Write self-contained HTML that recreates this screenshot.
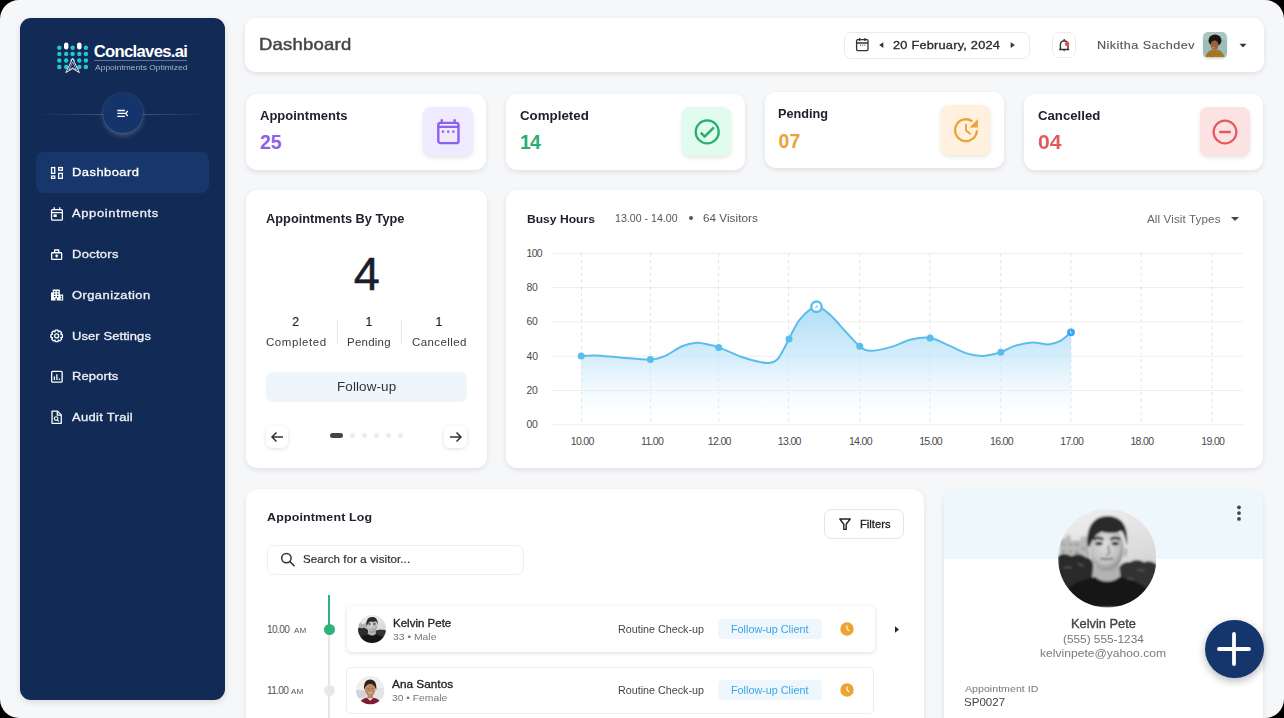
<!DOCTYPE html>
<html><head><meta charset="utf-8"><style>
html,body{margin:0;padding:0;background:#000;width:1284px;height:718px;overflow:hidden;}
#app{position:absolute;left:0;top:0;width:1284px;height:718px;background:#f6f7f9;border-radius:19px;overflow:hidden;font-family:"Liberation Sans",sans-serif;}
.t{position:absolute;white-space:nowrap;line-height:1;transform-origin:0 0;font-family:"Liberation Sans",sans-serif;}
</style></head><body><svg width="0" height="0" style="position:absolute"><defs><symbol id="kp" viewBox="0 0 100 100">
<defs>
<clipPath id="kpc"><circle cx="50" cy="50" r="50"/></clipPath>
<linearGradient id="kpsky" x1="0" y1="0" x2="0.3" y2="1"><stop offset="0" stop-color="#f0f0f0"/><stop offset="0.6" stop-color="#dcdcdc"/><stop offset="1" stop-color="#c8c8c8"/></linearGradient>
<radialGradient id="kpface" cx="0.45" cy="0.4" r="0.6"><stop offset="0" stop-color="#dedede"/><stop offset="0.7" stop-color="#c2c2c2"/><stop offset="1" stop-color="#8c8c8c"/></radialGradient>
<filter id="kpb" x="-5%" y="-5%" width="110%" height="110%"><feGaussianBlur stdDeviation="0.9"/></filter>
</defs>
<g clip-path="url(#kpc)"><g filter="url(#kpb)">
<rect width="100" height="100" fill="url(#kpsky)"/>
<path d="M2 52V30h6v-3h5v5h10v-4h8v24z" fill="#b9b9b9"/>
<path d="M4 36h3M11 36h3M17 36h4M24 40h4M4 43h3M11 43h3M17 44h4" stroke="#8a8a8a" stroke-width="1.6"/>
<path d="M0 48c5-4 10-2 14 0c4-3 10-3 14 1c4 0 7 3 8 7v44H0z" fill="#2c2c2c"/>
<path d="M100 56c-4-3-9-4-13-2c-4-3-10-3-14 0c-5-1-9 2-11 5v41h38z" fill="#333333"/>
<path d="M6 60c3-2 5 0 8-1M20 55c2 2 4 1 6 3M80 62c3-1 5 1 8 0M70 70c3 1 5 0 7 2" stroke="#555" stroke-width="1.6"/>
<path d="M36 58h26l3 22H33z" fill="#b3b3b3"/>
<ellipse cx="49.5" cy="40" rx="17" ry="23" fill="url(#kpface)"/>
<path d="M31 40c-3-2-3 8 1 9zM68 40c3-2 3 8-1 9z" fill="#a8a8a8"/>
<path d="M30 38c-2-16 4-31 20-31c14 0 22 9 20 30c-2-9-4-14-6-15c-5 3-12 3-20 1c-5 2-9 7-12 15z" fill="#2a2a2a"/>
<path d="M36 31c3-2 7-2 10 0M53 31c3-2 7-2 10 0" stroke="#2a2a2a" stroke-width="2.6" fill="none"/>
<ellipse cx="41.5" cy="35" rx="3.8" ry="1.9" fill="#2a2a2a"/>
<ellipse cx="58" cy="35" rx="3.8" ry="1.9" fill="#2a2a2a"/>
<path d="M51 37l1 8l-3 2" stroke="#9a9a9a" stroke-width="2.2" fill="none"/>
<path d="M43 50c4 1 9 1 13 0" stroke="#6d6d6d" stroke-width="1.8" fill="none"/>
<path d="M40 58c5 5 14 5 19 0" stroke="#a0a0a0" stroke-width="3" fill="none"/>
<path d="M4 100c2-16 8-24 22-28c6-2 10-3 12-3c5 6 19 6 24 0c2 0 6 1 12 3c14 4 20 12 22 28z" fill="#141414"/>
</g></g>
</symbol><symbol id="as" viewBox="0 0 100 100">
<defs><clipPath id="asc"><circle cx="50" cy="50" r="50"/></clipPath>
<filter id="asb" x="-5%" y="-5%" width="110%" height="110%"><feGaussianBlur stdDeviation="1.6"/></filter></defs>
<g clip-path="url(#asc)"><g filter="url(#asb)">
<rect width="100" height="100" fill="#f1efec"/>
<rect x="0" y="50" width="36" height="28" fill="#d3d3dc"/>
<rect x="62" y="42" width="38" height="40" fill="#e4e4e4"/>
<path d="M29 50c-4-24 6-38 21-38s25 14 21 38c-3-10-7-17-21-17s-18 7-21 17z" fill="#2f241d"/>
<ellipse cx="50" cy="49" rx="18" ry="22" fill="#c08a68"/>
<ellipse cx="43" cy="45" rx="2.6" ry="1.4" fill="#4a3020"/>
<ellipse cx="57" cy="45" rx="2.6" ry="1.4" fill="#4a3020"/>
<path d="M43 58c4 3 10 3 14 0" stroke="#f2e2da" stroke-width="2.4" fill="none"/>
<path d="M40 67h20v12H40z" fill="#bd8866"/>
<path d="M12 100c3-14 12-21 26-23l12 10l12-10c14 2 23 9 26 23z" fill="#7d1f33"/>
</g></g></symbol><symbol id="ns" viewBox="0 0 100 100">
<defs><filter id="nsb" x="-5%" y="-5%" width="110%" height="110%"><feGaussianBlur stdDeviation="1.6"/></filter></defs>
<g filter="url(#nsb)">
<rect width="100" height="100" fill="#9dbdbb"/>
<rect width="100" height="30" fill="#a9c6c3"/>
<ellipse cx="50" cy="33" rx="27" ry="23" fill="#1c1411"/>
<ellipse cx="48" cy="52" rx="16" ry="19" fill="#9b6243"/>
<ellipse cx="44" cy="62" rx="5" ry="3" fill="#e58aa0"/>
<path d="M10 100c4-20 18-32 40-32s34 12 40 32z" fill="#a47a2a"/>
<path d="M25 85l6 4M45 80l5 5M62 86l6 3M35 95l5 3" stroke="#6b4a1a" stroke-width="3"/>
</g></symbol></defs></svg><div id="app">
<div style="position:absolute;left:20.00px;top:18.00px;width:205.00px;height:682.00px;background:#122a56;border-radius:11px;box-shadow:0 2px 6px rgba(0,0,0,0.12);"></div>
<svg style="position:absolute;left:0.00px;top:0.00px;" width="240" height="90" viewBox="0 0 240 90"><circle cx="59.3" cy="47.7" r="2.2" fill="#22c8d2"/><rect x="64.00" y="42.4" width="4.4" height="7" rx="2.2" fill="#fff"/><circle cx="72.6" cy="47.7" r="2.2" fill="#22c8d2"/><rect x="77.10" y="42.4" width="4.4" height="7" rx="2.2" fill="#fff"/><circle cx="85.9" cy="47.7" r="2.2" fill="#22c8d2"/><circle cx="59.3" cy="53.9" r="2.2" fill="#22c8d2"/><circle cx="66.2" cy="53.9" r="2.2" fill="#22c8d2"/><circle cx="72.6" cy="53.9" r="2.2" fill="#22c8d2"/><circle cx="79.3" cy="53.9" r="2.2" fill="#22c8d2"/><circle cx="85.9" cy="53.9" r="2.2" fill="#22c8d2"/><circle cx="59.3" cy="60.5" r="2.2" fill="#22c8d2"/><circle cx="66.2" cy="60.5" r="2.2" fill="#22c8d2"/><circle cx="72.6" cy="60.5" r="2.2" fill="#22c8d2"/><circle cx="79.3" cy="60.5" r="2.2" fill="#22c8d2"/><circle cx="85.9" cy="60.5" r="2.2" fill="#22c8d2"/><circle cx="59.3" cy="67.0" r="2.2" fill="#22c8d2"/><circle cx="66.2" cy="67.0" r="2.2" fill="#22c8d2"/><circle cx="72.6" cy="67.0" r="2.2" fill="#22c8d2"/><circle cx="79.3" cy="67.0" r="2.2" fill="#22c8d2"/><circle cx="85.9" cy="67.0" r="2.2" fill="#22c8d2"/><path d="M72.6 58.4 L79.4 72.6 L72.6 68.6 L65.8 72.6 Z" fill="#122a56" stroke="#fff" stroke-width="0.9" stroke-linejoin="round"/><path d="M72.6 62 L76.4 70 L72.6 67.7 L68.8 70 Z" fill="none" stroke="#fff" stroke-width="0.55"/></svg>
<div class="t" style="left:93.80px;top:44px;font-size:16.65px;color:#fff;font-weight:700;letter-spacing:-0.700px;">Conclaves.ai</div>
<div style="position:absolute;left:94.00px;top:60.00px;width:93.00px;height:0.80px;background:rgba(255,255,255,0.35);"></div>
<div class="t" style="left:95.00px;top:64px;font-size:7.90px;color:#a9b4c8;transform:scaleX(1.075);">Appointments Optimized</div>
<div style="position:absolute;left:36.00px;top:113.80px;width:174.00px;height:1.00px;background:linear-gradient(90deg,rgba(255,255,255,0),rgba(255,255,255,0.22) 45%,rgba(255,255,255,0.22) 55%,rgba(255,255,255,0));"></div>
<div style="position:absolute;left:102.50px;top:92.50px;width:40.60px;height:40.60px;background:#15346b;border-radius:50%;box-shadow:0 3px 5px rgba(255,255,255,0.20),0 0 2px rgba(255,255,255,0.18);"></div>
<svg style="position:absolute;left:112.00px;top:105.00px;" width="22" height="16" viewBox="0 0 22 16"><path d="M5.3 5.5h7.6M5.3 8.4h7.6M5.3 11.3h7.6" stroke="#fff" stroke-width="1.3"/><path d="M15.8 6l-2.2 2.5l2.2 2.5" fill="none" stroke="#fff" stroke-width="1.2"/></svg>
<div style="position:absolute;left:36.00px;top:152.40px;width:173.30px;height:40.70px;background:#17366c;border-radius:8px;"></div>
<div class="t" style="left:72.00px;top:167px;font-size:11.55px;color:#fff;letter-spacing:0.412px;transform:scaleX(1.120);-webkit-text-stroke:0.32px #fff;">Dashboard</div>
<div class="t" style="left:72.00px;top:208px;font-size:11.55px;color:#eef0f5;letter-spacing:0.576px;transform:scaleX(1.120);-webkit-text-stroke:0.32px #eef0f5;">Appointments</div>
<div class="t" style="left:72.00px;top:249px;font-size:11.55px;color:#eef0f5;letter-spacing:0.268px;transform:scaleX(1.120);-webkit-text-stroke:0.32px #eef0f5;">Doctors</div>
<div class="t" style="left:72.00px;top:290px;font-size:11.55px;color:#eef0f5;letter-spacing:0.390px;transform:scaleX(1.120);-webkit-text-stroke:0.32px #eef0f5;">Organization</div>
<div class="t" style="left:72.00px;top:331px;font-size:11.55px;color:#eef0f5;letter-spacing:0.093px;transform:scaleX(1.120);-webkit-text-stroke:0.32px #eef0f5;">User Settings</div>
<div class="t" style="left:72.00px;top:371px;font-size:11.55px;color:#eef0f5;letter-spacing:0.123px;transform:scaleX(1.120);-webkit-text-stroke:0.32px #eef0f5;">Reports</div>
<div class="t" style="left:72.00px;top:412px;font-size:11.55px;color:#eef0f5;letter-spacing:0.286px;transform:scaleX(1.120);-webkit-text-stroke:0.32px #eef0f5;">Audit Trail</div>
<svg style="position:absolute;left:50.00px;top:166.00px;" width="15" height="15" viewBox="0 0 15 15"><rect x="1.55" y="1.55" width="3.2" height="5.8" stroke="#fff" fill="none" stroke-width="1.3"/><rect x="1.55" y="10.05" width="3.2" height="2.3" stroke="#fff" fill="none" stroke-width="1.3"/><rect x="8.65" y="1.55" width="3.7" height="2.7" stroke="#fff" fill="none" stroke-width="1.3"/><rect x="8.65" y="7.35" width="3.7" height="5" stroke="#fff" fill="none" stroke-width="1.3"/></svg>
<svg style="position:absolute;left:50.00px;top:206.00px;" width="15" height="15" viewBox="0 0 15 15"><rect x="1.55" y="3.6" width="10.8" height="10.6" rx="1" stroke="#fff" fill="none" stroke-width="1.3"/><path d="M1.55 6.6h10.8M4.2 1.3v3M9.7 1.3v3" stroke="#fff" fill="none" stroke-width="1.3"/><rect x="3.6" y="8.4" width="3.1" height="2.6" fill="#fff"/></svg>
<svg style="position:absolute;left:50.00px;top:248.00px;" width="15" height="15" viewBox="0 0 15 15"><rect x="1.65" y="4.75" width="10" height="6.7" rx="0.8" stroke="#fff" fill="none" stroke-width="1.3"/><path d="M4.6 4.75V2h4.1v2.75" stroke="#fff" fill="none" stroke-width="1.3"/><path d="M6.65 6.4v3M5.15 7.9h3" stroke="#fff" stroke-width="1.3"/></svg>
<svg style="position:absolute;left:50.00px;top:288.00px;" width="15" height="15" viewBox="0 0 15 15"><path d="M1 12.6V4.6h1.7V1.4h7.1v5h3.4v6.2z" fill="#fff"/><path d="M3.9 2.9h1.5v1.4H3.9zM6.9 2.9h1.5v1.4H6.9zM3.9 5.4h1.5v1.4H3.9zM6.9 5.4h1.5v1.4H6.9zM3.9 7.9h1.5v1.4H3.9zM6.9 7.9h1.5v1.4H6.9zM10.7 7.8h1.4v1.4h-1.4zM10.7 10.1h1.4v1.4h-1.4zM5.4 10.4h1.5v2.2H5.4z" fill="#122a56"/></svg>
<svg style="position:absolute;left:50.00px;top:329.00px;" width="15" height="15" viewBox="0 0 15 15"><path d="M12.41 5.66 L12.41 8.24 L10.86 8.54 L10.75 8.81 L11.63 10.11 L9.81 11.93 L8.51 11.05 L8.24 11.16 L7.94 12.71 L5.36 12.71 L5.06 11.16 L4.79 11.05 L3.49 11.93 L1.67 10.11 L2.55 8.81 L2.44 8.54 L0.89 8.24 L0.89 5.66 L2.44 5.36 L2.55 5.09 L1.67 3.79 L3.49 1.97 L4.79 2.85 L5.06 2.74 L5.36 1.19 L7.94 1.19 L8.24 2.74 L8.51 2.85 L9.81 1.97 L11.63 3.79 L10.75 5.09 L10.86 5.36Z" stroke="#fff" fill="none" stroke-width="1.3" stroke-linejoin="round"/><circle cx="6.65" cy="6.95" r="2" stroke="#fff" fill="none" stroke-width="1.3"/></svg>
<svg style="position:absolute;left:50.00px;top:370.00px;" width="15" height="15" viewBox="0 0 15 15"><rect x="1.65" y="1.35" width="10.5" height="10.8" rx="1" stroke="#fff" fill="none" stroke-width="1.3"/><path d="M4.4 10V6.6M6.9 10V4.3M9.4 10V8.4" stroke="#fff" stroke-width="1.3"/></svg>
<svg style="position:absolute;left:50.00px;top:410.00px;" width="15" height="15" viewBox="0 0 15 15"><path d="M2.05 1.15H7.5l3.75 3.75v8.45H2.05z" stroke="#fff" fill="none" stroke-width="1.3" stroke-linejoin="round"/><path d="M7.3 1.15v3.95h3.95" stroke="#fff" fill="none" stroke-width="1.3"/><circle cx="6.1" cy="8.6" r="1.8" stroke="#fff" stroke-width="1.1" fill="none"/><path d="M7.4 9.9l1.4 1.4" stroke="#fff" stroke-width="1.2"/></svg>
<div style="position:absolute;left:245.30px;top:18.00px;width:1018.70px;height:53.80px;background:#fff;border-radius:11px;box-shadow:0 2px 5px rgba(20,30,60,0.10);"></div>
<div class="t" style="left:258.80px;top:36px;font-size:16.50px;color:#454545;letter-spacing:0.203px;transform:scaleX(1.120);-webkit-text-stroke:0.46px #454545;">Dashboard</div>
<div style="position:absolute;left:843.90px;top:31.50px;width:186.40px;height:27.00px;border:1px solid #eaeaec;border-radius:7px;box-sizing:border-box;"></div>
<svg style="position:absolute;left:855.00px;top:37.00px;" width="15" height="15" viewBox="0 0 15 15"><rect x="1.6" y="2.6" width="11.4" height="11" rx="1" fill="none" stroke="#333" stroke-width="1.3"/><path d="M1.6 6h11.4M4.6 1v3M10 1v3" stroke="#333" stroke-width="1.3"/><path d="M5 8.2h1M7.2 8.2h1M9.4 8.2h1" stroke="#333" stroke-width="1"/></svg>
<svg style="position:absolute;left:878.00px;top:41.00px;" width="7" height="8" viewBox="0 0 7 8"><path d="M5.3 1.2v5.8L1.2 4.1z" fill="#333"/></svg>
<div class="t" style="left:893.10px;top:40px;font-size:11.40px;color:#2b2b2b;letter-spacing:0.202px;transform:scaleX(1.120);-webkit-text-stroke:0.32px #2b2b2b;">20 February, 2024</div>
<svg style="position:absolute;left:1009.00px;top:41.00px;" width="7" height="8" viewBox="0 0 7 8"><path d="M1.7 1.2v5.8l4.1-2.9z" fill="#333"/></svg>
<div style="position:absolute;left:1051.90px;top:31.60px;width:24.60px;height:26.50px;border:1px solid #ececee;border-radius:7px;box-sizing:border-box;"></div>
<svg style="position:absolute;left:1057.00px;top:38.00px;" width="14" height="15" viewBox="0 0 14 15"><path d="M3.4 11V6.7Q3.4 3 7.2 2.9Q11 3 11 6.7V11" fill="none" stroke="#333" stroke-width="1.4"/><path d="M2.2 11.5H12.2" stroke="#333" stroke-width="1.4"/><circle cx="7.2" cy="2" r="0.9" fill="#333"/><path d="M6 12.3h2.4L7.2 13.6z" fill="#333"/><circle cx="10.1" cy="6" r="2.3" fill="#e84c55"/></svg>
<div class="t" style="left:1097.30px;top:40px;font-size:11.25px;color:#555;letter-spacing:0.414px;transform:scaleX(1.120);-webkit-text-stroke:0.14px #555;">Nikitha Sachdev</div>
<div style='position:absolute;left:1203.1px;top:32.3px;width:24px;height:25.5px;border-radius:5px;overflow:hidden;box-shadow:0 1px 2px rgba(0,0,0,0.15)'><svg width='24' height='25.5' viewBox='0 0 100 100' preserveAspectRatio='none'><use href='#ns'/></svg></div>
<svg style="position:absolute;left:1238.00px;top:42.00px;" width="10" height="7" viewBox="0 0 10 7"><path d="M1.5 1.8h7l-3.5 3.6z" fill="#333"/></svg>
<div style="position:absolute;left:246.10px;top:93.50px;width:239.90px;height:76.10px;background:#fff;border-radius:11px;box-shadow:0 2px 5px rgba(20,30,60,0.10);"></div>
<div class="t" style="left:259.80px;top:110px;font-size:12.30px;color:#20212e;font-weight:700;transform:scaleX(1.058);">Appointments</div>
<div class="t" style="left:260.00px;top:133px;font-size:19.40px;color:#8b61ee;font-weight:700;">25</div>
<div style="position:absolute;left:423.30px;top:106.90px;width:49.60px;height:49.40px;background:#efeafd;border-radius:8px;box-shadow:0 2px 4px rgba(0,0,0,0.10);"></div>
<div style="position:absolute;left:506.10px;top:93.50px;width:239.00px;height:76.10px;background:#fff;border-radius:11px;box-shadow:0 2px 5px rgba(20,30,60,0.10);"></div>
<div class="t" style="left:519.80px;top:110px;font-size:12.30px;color:#20212e;font-weight:700;transform:scaleX(1.083);">Completed</div>
<div class="t" style="left:520.00px;top:133px;font-size:19.40px;color:#2aae6f;font-weight:700;letter-spacing:-0.700px;">14</div>
<div style="position:absolute;left:681.70px;top:106.90px;width:49.60px;height:49.40px;background:#e2fbef;border-radius:8px;box-shadow:0 2px 4px rgba(0,0,0,0.10);"></div>
<div style="position:absolute;left:764.70px;top:92.10px;width:239.00px;height:75.90px;background:#fff;border-radius:11px;box-shadow:0 2px 5px rgba(20,30,60,0.10);"></div>
<div class="t" style="left:778.40px;top:108px;font-size:12.30px;color:#20212e;font-weight:700;transform:scaleX(1.031);">Pending</div>
<div class="t" style="left:778.60px;top:132px;font-size:19.40px;color:#eba236;font-weight:700;">07</div>
<div style="position:absolute;left:940.90px;top:105.30px;width:49.60px;height:49.40px;background:#fff1dd;border-radius:8px;box-shadow:0 2px 4px rgba(0,0,0,0.10);"></div>
<div style="position:absolute;left:1024.10px;top:93.50px;width:239.00px;height:76.10px;background:#fff;border-radius:11px;box-shadow:0 2px 5px rgba(20,30,60,0.10);"></div>
<div class="t" style="left:1037.80px;top:110px;font-size:12.30px;color:#20212e;font-weight:700;transform:scaleX(1.072);">Cancelled</div>
<div class="t" style="left:1038.00px;top:133px;font-size:19.40px;color:#e05a5e;font-weight:700;transform:scaleX(1.088);">04</div>
<div style="position:absolute;left:1200.30px;top:106.90px;width:49.60px;height:49.40px;background:#fde2e4;border-radius:8px;box-shadow:0 2px 4px rgba(0,0,0,0.10);"></div>
<svg style="position:absolute;left:433.00px;top:117.00px;" width="30" height="30" viewBox="0 0 30 30"><rect x="5.3" y="5.9" width="20.2" height="20.2" rx="2.2" fill="none" stroke="#8b61ee" stroke-width="2.4"/><path d="M5.3 9.9h20.2M8.8 2.3v4.6M21.6 2.3v4.6" stroke="#8b61ee" stroke-width="2.4"/><path d="M8.9 14.6h2.2M14.1 14.6h2.2M19.3 14.6h2.2" stroke="#8b61ee" stroke-width="2.2"/></svg>
<svg style="position:absolute;left:691.70px;top:116.70px;" width="30" height="30" viewBox="0 0 30 30"><circle cx="15.2" cy="14.9" r="11.5" fill="none" stroke="#2aae6f" stroke-width="2.3"/><path d="M8.8 15.6l3.8 4.1l9.3-9.4" fill="none" stroke="#2aae6f" stroke-width="2.5" stroke-linejoin="round"/></svg>
<svg style="position:absolute;left:950.50px;top:115.00px;" width="30" height="30" viewBox="0 0 30 30"><path d="M25.9 15.2A10.9 10.9 0 1 1 21.25 6.27" fill="none" stroke="#eba236" stroke-width="2.3"/><path d="M26.9 4L18.5 12.4H26.9z" fill="#eba236"/><path d="M15 9.6v6l4.1 3.1" fill="none" stroke="#eba236" stroke-width="1.9" stroke-linecap="round" stroke-linejoin="round"/></svg>
<svg style="position:absolute;left:1210.10px;top:116.70px;" width="30" height="30" viewBox="0 0 30 30"><circle cx="15" cy="15" r="11.4" fill="none" stroke="#e05a5e" stroke-width="2.2"/><path d="M9.2 15h11.6" stroke="#e05a5e" stroke-width="2.4"/></svg>
<div style="position:absolute;left:245.70px;top:190.10px;width:241.40px;height:278.10px;background:#fff;border-radius:11px;box-shadow:0 2px 5px rgba(20,30,60,0.10);"></div>
<div class="t" style="left:265.90px;top:213px;font-size:12.30px;color:#20212e;font-weight:700;transform:scaleX(1.041);">Appointments By Type</div>
<div class="t" style="left:353.80px;top:251px;font-size:46.90px;color:#1b1c2c;-webkit-text-stroke:0.47px #1b1c2c;">4</div>
<div class="t" style="left:292.20px;top:316px;font-size:12.15px;color:#222;-webkit-text-stroke:0.18px #222;">2</div>
<div class="t" style="left:365.50px;top:316px;font-size:12.15px;color:#222;-webkit-text-stroke:0.18px #222;">1</div>
<div class="t" style="left:435.40px;top:316px;font-size:12.15px;color:#222;-webkit-text-stroke:0.18px #222;">1</div>
<div class="t" style="left:265.90px;top:338px;font-size:10.25px;color:#3a3a3a;letter-spacing:0.512px;transform:scaleX(1.120);">Completed</div>
<div class="t" style="left:347.30px;top:338px;font-size:10.25px;color:#3a3a3a;letter-spacing:0.210px;transform:scaleX(1.120);">Pending</div>
<div class="t" style="left:412.10px;top:338px;font-size:10.25px;color:#3a3a3a;letter-spacing:0.385px;transform:scaleX(1.120);">Cancelled</div>
<div style="position:absolute;left:336.70px;top:318.80px;width:1.00px;height:26.00px;background:#e8e8e8;"></div>
<div style="position:absolute;left:401.40px;top:318.80px;width:1.00px;height:26.00px;background:#e8e8e8;"></div>
<div style="position:absolute;left:265.80px;top:372.00px;width:201.30px;height:29.70px;background:#eef6fb;border-radius:7px;"></div>
<div class="t" style="left:336.90px;top:381px;font-size:12.00px;color:#333;letter-spacing:0.096px;transform:scaleX(1.120);">Follow-up</div>
<div style="position:absolute;left:265.80px;top:425.80px;width:22.20px;height:22.20px;background:#fff;border-radius:6px;box-shadow:0 1px 4px rgba(0,0,0,0.13);"></div>
<div style="position:absolute;left:444.30px;top:425.80px;width:22.40px;height:22.20px;background:#fff;border-radius:6px;box-shadow:0 1px 4px rgba(0,0,0,0.13);"></div>
<svg style="position:absolute;left:269.00px;top:430.00px;" width="16" height="14" viewBox="0 0 16 14"><path d="M14 7H3M7.5 2.5L3 7l4.5 4.5" fill="none" stroke="#333" stroke-width="1.5"/></svg>
<svg style="position:absolute;left:447.50px;top:430.00px;" width="16" height="14" viewBox="0 0 16 14"><path d="M2 7h11M8.5 2.5L13 7l-4.5 4.5" fill="none" stroke="#333" stroke-width="1.5"/></svg>
<div style="position:absolute;left:329.70px;top:432.90px;width:13.40px;height:5.40px;background:#444;border-radius:3px;"></div>
<div style="position:absolute;left:349.80px;top:432.90px;width:5.40px;height:5.40px;background:#ececec;border-radius:50%;"></div>
<div style="position:absolute;left:361.60px;top:432.90px;width:5.40px;height:5.40px;background:#ececec;border-radius:50%;"></div>
<div style="position:absolute;left:373.80px;top:432.90px;width:5.40px;height:5.40px;background:#ececec;border-radius:50%;"></div>
<div style="position:absolute;left:385.80px;top:432.90px;width:5.40px;height:5.40px;background:#ececec;border-radius:50%;"></div>
<div style="position:absolute;left:397.80px;top:432.90px;width:5.40px;height:5.40px;background:#ececec;border-radius:50%;"></div>
<div style="position:absolute;left:506.10px;top:190.10px;width:756.50px;height:278.10px;background:#fff;border-radius:11px;box-shadow:0 2px 5px rgba(20,30,60,0.10);"></div>
<div class="t" style="left:526.80px;top:213px;font-size:11.70px;color:#20212e;font-weight:700;transform:scaleX(1.035);">Busy Hours</div>
<div class="t" style="left:614.50px;top:214px;font-size:10.40px;color:#555;transform:scaleX(1.023);">13.00 - 14.00</div>
<div style="position:absolute;left:689.00px;top:216.10px;width:4.40px;height:4.40px;background:#555;border-radius:50%;"></div>
<div class="t" style="left:703.20px;top:214px;font-size:10.40px;color:#555;letter-spacing:0.053px;transform:scaleX(1.120);">64 Visitors</div>
<div class="t" style="left:1146.60px;top:215px;font-size:10.40px;color:#666;letter-spacing:0.094px;transform:scaleX(1.120);">All Visit Types</div>
<svg style="position:absolute;left:1229.00px;top:215.00px;" width="12" height="8" viewBox="0 0 12 8"><path d="M2 2h8l-4 4z" fill="#444"/></svg>
<svg style="position:absolute;left:0.00px;top:0.00px;pointer-events:none;" width="1284" height="718" viewBox="0 0 1284 718"><path d="M551.2 253.3H1243.1" stroke="#eeeeee" stroke-width="1"/><path d="M551.2 287.6H1243.1" stroke="#eeeeee" stroke-width="1"/><path d="M551.2 321.9H1243.1" stroke="#eeeeee" stroke-width="1"/><path d="M551.2 356.2H1243.1" stroke="#eeeeee" stroke-width="1"/><path d="M551.2 390.5H1243.1" stroke="#eeeeee" stroke-width="1"/><path d="M551.2 424.7H1243.1" stroke="#eeeeee" stroke-width="1"/><path d="M581.5 253.3V424.7" stroke="#e2e2e2" stroke-width="1" stroke-dasharray="3.2 3.4"/><path d="M650.6 253.3V424.7" stroke="#e2e2e2" stroke-width="1" stroke-dasharray="3.2 3.4"/><path d="M718.6 253.3V424.7" stroke="#e2e2e2" stroke-width="1" stroke-dasharray="3.2 3.4"/><path d="M788.6 253.3V424.7" stroke="#e2e2e2" stroke-width="1" stroke-dasharray="3.2 3.4"/><path d="M859.7 253.3V424.7" stroke="#e2e2e2" stroke-width="1" stroke-dasharray="3.2 3.4"/><path d="M929.9 253.3V424.7" stroke="#e2e2e2" stroke-width="1" stroke-dasharray="3.2 3.4"/><path d="M1000.8 253.3V424.7" stroke="#e2e2e2" stroke-width="1" stroke-dasharray="3.2 3.4"/><path d="M1071.0 253.3V424.7" stroke="#e2e2e2" stroke-width="1" stroke-dasharray="3.2 3.4"/><path d="M1141.2 253.3V424.7" stroke="#e2e2e2" stroke-width="1" stroke-dasharray="3.2 3.4"/><path d="M1212.1 253.3V424.7" stroke="#e2e2e2" stroke-width="1" stroke-dasharray="3.2 3.4"/><defs><linearGradient id="fg" x1="0" y1="0" x2="0" y2="1"><stop offset="0" stop-color="#a6daf6" stop-opacity="0.9"/><stop offset="0.45" stop-color="#c6e7fa" stop-opacity="0.7"/><stop offset="0.8" stop-color="#e3f4fd" stop-opacity="0.25"/><stop offset="1" stop-color="#ffffff" stop-opacity="0"/></linearGradient></defs><path d="M581.2 356.1 C583.5 356.0 588.5 355.3 594.9 355.5 C601.3 355.7 610.5 356.7 619.8 357.4 C629.0 358.1 642.9 359.8 650.4 359.6 C657.9 359.4 659.4 358.3 664.7 356.1 C670.0 353.9 676.7 348.4 682.1 346.2 C687.5 344.0 692.5 343.0 697.1 342.8 C701.7 342.6 706.0 344.1 709.6 344.9 C713.2 345.7 713.0 345.2 718.7 347.4 C724.5 349.5 737.1 355.3 744.1 357.8 C751.1 360.3 756.6 361.4 761.0 362.2 C765.4 363.0 767.6 363.2 770.3 362.8 C773.0 362.4 774.9 361.9 777.0 359.8 C779.1 357.8 781.0 354.0 783.0 350.5 C785.0 347.0 786.1 344.2 789.0 338.9 C791.9 333.6 795.7 324.2 800.3 318.8 C804.9 313.4 811.4 307.3 816.4 306.7 C821.4 306.1 825.5 311.0 830.3 315.1 C835.1 319.2 840.5 326.2 845.4 331.4 C850.3 336.6 855.6 343.0 859.8 346.2 C864.0 349.4 865.2 350.7 870.5 350.8 C875.8 350.9 884.6 348.8 891.4 346.9 C898.1 345.0 904.5 341.0 911.0 339.5 C917.5 338.0 923.8 336.9 930.1 337.9 C936.4 338.9 942.5 342.7 948.6 345.3 C954.7 347.9 960.9 351.6 966.6 353.4 C972.3 355.2 977.3 356.1 983.0 355.9 C988.7 355.7 995.6 353.9 1000.8 352.3 C1006.0 350.7 1008.8 347.7 1014.0 346.1 C1019.2 344.5 1026.3 342.8 1032.0 342.5 C1037.7 342.2 1043.8 344.6 1048.4 344.4 C1053.0 344.2 1056.0 343.2 1059.8 341.2 C1063.6 339.2 1069.1 333.8 1071.0 332.3 L1071 424.7 L581.2 424.7 Z" fill="url(#fg)"/><path d="M581.2 356.1 C583.5 356.0 588.5 355.3 594.9 355.5 C601.3 355.7 610.5 356.7 619.8 357.4 C629.0 358.1 642.9 359.8 650.4 359.6 C657.9 359.4 659.4 358.3 664.7 356.1 C670.0 353.9 676.7 348.4 682.1 346.2 C687.5 344.0 692.5 343.0 697.1 342.8 C701.7 342.6 706.0 344.1 709.6 344.9 C713.2 345.7 713.0 345.2 718.7 347.4 C724.5 349.5 737.1 355.3 744.1 357.8 C751.1 360.3 756.6 361.4 761.0 362.2 C765.4 363.0 767.6 363.2 770.3 362.8 C773.0 362.4 774.9 361.9 777.0 359.8 C779.1 357.8 781.0 354.0 783.0 350.5 C785.0 347.0 786.1 344.2 789.0 338.9 C791.9 333.6 795.7 324.2 800.3 318.8 C804.9 313.4 811.4 307.3 816.4 306.7 C821.4 306.1 825.5 311.0 830.3 315.1 C835.1 319.2 840.5 326.2 845.4 331.4 C850.3 336.6 855.6 343.0 859.8 346.2 C864.0 349.4 865.2 350.7 870.5 350.8 C875.8 350.9 884.6 348.8 891.4 346.9 C898.1 345.0 904.5 341.0 911.0 339.5 C917.5 338.0 923.8 336.9 930.1 337.9 C936.4 338.9 942.5 342.7 948.6 345.3 C954.7 347.9 960.9 351.6 966.6 353.4 C972.3 355.2 977.3 356.1 983.0 355.9 C988.7 355.7 995.6 353.9 1000.8 352.3 C1006.0 350.7 1008.8 347.7 1014.0 346.1 C1019.2 344.5 1026.3 342.8 1032.0 342.5 C1037.7 342.2 1043.8 344.6 1048.4 344.4 C1053.0 344.2 1056.0 343.2 1059.8 341.2 C1063.6 339.2 1069.1 333.8 1071.0 332.3" fill="none" stroke="#5bbdec" stroke-width="2"/><circle cx="581.2" cy="356.1" r="3.5" fill="#5bbdec"/><circle cx="650.4" cy="359.6" r="3.5" fill="#5bbdec"/><circle cx="718.7" cy="347.4" r="3.5" fill="#5bbdec"/><circle cx="789" cy="338.9" r="3.5" fill="#5bbdec"/><circle cx="859.8" cy="346.2" r="3.5" fill="#5bbdec"/><circle cx="930.1" cy="337.9" r="3.5" fill="#5bbdec"/><circle cx="1000.8" cy="352.3" r="3.5" fill="#5bbdec"/><circle cx="816.5" cy="306.7" r="5.2" fill="#fff" stroke="#5bbdec" stroke-width="2.4"/><path d="M815.4 307.9l2.2-2.2" stroke="#5bbdec" stroke-width="1.1"/><circle cx="1071" cy="332.3" r="3.9" fill="#3aa7ec"/><path d="M1070.3 330.6l0.3 1.9 1.5 1" fill="none" stroke="#fff" stroke-width="0.8"/></svg>
<div class="t" style="left:526.60px;top:249px;font-size:10.40px;color:#4a4a4a;letter-spacing:-0.700px;">100</div>
<div class="t" style="left:526.60px;top:283px;font-size:10.40px;color:#4a4a4a;letter-spacing:-0.400px;">80</div>
<div class="t" style="left:526.60px;top:317px;font-size:10.40px;color:#4a4a4a;letter-spacing:-0.400px;">60</div>
<div class="t" style="left:526.60px;top:352px;font-size:10.40px;color:#4a4a4a;letter-spacing:-0.200px;">40</div>
<div class="t" style="left:526.60px;top:386px;font-size:10.40px;color:#4a4a4a;letter-spacing:-0.400px;">20</div>
<div class="t" style="left:526.60px;top:420px;font-size:10.40px;color:#4a4a4a;letter-spacing:-0.400px;">00</div>
<div class="t" style="left:570.75px;top:436px;font-size:10.55px;color:#4a4a4a;letter-spacing:-0.700px;">10.00</div>
<div class="t" style="left:641.00px;top:436px;font-size:10.55px;color:#4a4a4a;letter-spacing:-0.700px;">11.00</div>
<div class="t" style="left:707.85px;top:436px;font-size:10.55px;color:#4a4a4a;letter-spacing:-0.700px;">12.00</div>
<div class="t" style="left:777.85px;top:436px;font-size:10.55px;color:#4a4a4a;letter-spacing:-0.700px;">13.00</div>
<div class="t" style="left:848.95px;top:436px;font-size:10.55px;color:#4a4a4a;letter-spacing:-0.700px;">14.00</div>
<div class="t" style="left:919.15px;top:436px;font-size:10.55px;color:#4a4a4a;letter-spacing:-0.700px;">15.00</div>
<div class="t" style="left:990.05px;top:436px;font-size:10.55px;color:#4a4a4a;letter-spacing:-0.700px;">16.00</div>
<div class="t" style="left:1060.25px;top:436px;font-size:10.55px;color:#4a4a4a;letter-spacing:-0.700px;">17.00</div>
<div class="t" style="left:1130.45px;top:436px;font-size:10.55px;color:#4a4a4a;letter-spacing:-0.700px;">18.00</div>
<div class="t" style="left:1201.35px;top:436px;font-size:10.55px;color:#4a4a4a;letter-spacing:-0.700px;">19.00</div>
<div style="position:absolute;left:245.80px;top:488.90px;width:678.20px;height:271.10px;background:#fff;border-radius:12px;box-shadow:0 2px 5px rgba(20,30,60,0.10);"></div>
<div class="t" style="left:266.80px;top:512px;font-size:11.10px;color:#20212e;font-weight:700;letter-spacing:0.151px;transform:scaleX(1.120);">Appointment Log</div>
<div style="position:absolute;left:267.30px;top:545.40px;width:256.60px;height:29.20px;border:1px solid #efeff1;border-radius:7px;box-sizing:border-box;"></div>
<svg style="position:absolute;left:279.00px;top:551.00px;" width="18" height="18" viewBox="0 0 18 18"><circle cx="7.4" cy="7.1" r="4.7" fill="none" stroke="#333" stroke-width="1.5"/><path d="M10.8 10.5l4.3 4.3" stroke="#333" stroke-width="1.6" stroke-linecap="round"/></svg>
<div class="t" style="left:303.40px;top:555px;font-size:10.25px;color:#333;letter-spacing:0.099px;transform:scaleX(1.120);-webkit-text-stroke:0.21px #333;">Search for a visitor...</div>
<div style="position:absolute;left:823.70px;top:509.00px;width:80.00px;height:29.50px;border:1px solid #e6e6e8;border-radius:7px;box-sizing:border-box;"></div>
<svg style="position:absolute;left:838.00px;top:517.00px;" width="14" height="14" viewBox="0 0 14 14"><path d="M1.8 2h10.4L8.2 7.2v5.2H5.8V7.2z" fill="none" stroke="#222" stroke-width="1.4" stroke-linejoin="round"/></svg>
<div class="t" style="left:859.90px;top:520px;font-size:10.40px;color:#222;transform:scaleX(1.078);-webkit-text-stroke:0.29px #222;">Filters</div>
<div style="position:absolute;left:328.30px;top:595.00px;width:1.50px;height:33.00px;background:#2fb37a;"></div>
<div style="position:absolute;left:328.30px;top:628.00px;width:1.50px;height:92.00px;background:#e6e6e6;"></div>
<div style="position:absolute;left:323.50px;top:623.50px;width:11.00px;height:11.00px;background:#2fb37a;border-radius:50%;"></div>
<div style="position:absolute;left:323.50px;top:684.70px;width:11.00px;height:11.00px;background:#e8e8e8;border-radius:50%;"></div>
<div class="t" style="left:267.10px;top:625px;font-size:10.10px;color:#555;letter-spacing:-0.600px;">10.00</div>
<div class="t" style="left:293.90px;top:627px;font-size:7.80px;color:#555;transform:scaleX(1.034);">AM</div>
<div class="t" style="left:267.10px;top:686px;font-size:10.10px;color:#555;letter-spacing:-0.700px;">11.00</div>
<div class="t" style="left:291.20px;top:688px;font-size:7.80px;color:#555;transform:scaleX(1.034);">AM</div>
<div style="position:absolute;left:347.40px;top:605.60px;width:527.50px;height:46.90px;background:#fff;border-radius:5px;box-shadow:0 1px 4px rgba(0,0,0,0.14);"></div>
<div style="position:absolute;left:346.00px;top:666.80px;width:527.60px;height:47.20px;background:#fff;border:1px solid #ececec;border-radius:5px;box-sizing:border-box;"></div>
<svg style="position:absolute;left:357.80px;top:615.00px;" width="28" height="28" viewBox="0 0 28 28"><use href='#kp' width='28' height='28'/></svg>
<svg style="position:absolute;left:356.20px;top:676.20px;" width="28.4" height="28.4" viewBox="0 0 28.4 28.4"><use href='#as' width='28.4' height='28.4'/></svg>
<div class="t" style="left:393.00px;top:618px;font-size:10.85px;color:#222;transform:scaleX(1.062);-webkit-text-stroke:0.30px #222;">Kelvin Pete</div>
<div class="t" style="left:393.00px;top:632px;font-size:9.80px;color:#777;transform:scaleX(1.059);">33 • Male</div>
<div class="t" style="left:391.60px;top:679px;font-size:10.85px;color:#222;transform:scaleX(1.090);-webkit-text-stroke:0.30px #222;">Ana Santos</div>
<div class="t" style="left:391.60px;top:693px;font-size:9.80px;color:#777;transform:scaleX(1.053);">30 • Female</div>
<div class="t" style="left:617.90px;top:625px;font-size:10.25px;color:#444;transform:scaleX(1.047);">Routine Check-up</div>
<div style="position:absolute;left:718.40px;top:619.20px;width:103.90px;height:19.90px;background:#eef7fd;border-radius:4px;"></div>
<div class="t" style="left:731.00px;top:625px;font-size:10.25px;color:#3ba6e6;transform:scaleX(1.053);">Follow-up Client</div>
<svg style="position:absolute;left:840.20px;top:622.10px;" width="14" height="14" viewBox="0 0 14 14"><circle cx="7" cy="7" r="6.7" fill="#eda32f"/><path d="M7 3.8V7l2 1.6" fill="none" stroke="#fff" stroke-width="1.1" stroke-linecap="round"/></svg>
<div class="t" style="left:617.90px;top:686px;font-size:10.25px;color:#444;transform:scaleX(1.047);">Routine Check-up</div>
<div style="position:absolute;left:718.40px;top:680.40px;width:103.90px;height:19.90px;background:#eef7fd;border-radius:4px;"></div>
<div class="t" style="left:731.00px;top:686px;font-size:10.25px;color:#3ba6e6;transform:scaleX(1.053);">Follow-up Client</div>
<svg style="position:absolute;left:840.20px;top:683.30px;" width="14" height="14" viewBox="0 0 14 14"><circle cx="7" cy="7" r="6.7" fill="#eda32f"/><path d="M7 3.8V7l2 1.6" fill="none" stroke="#fff" stroke-width="1.1" stroke-linecap="round"/></svg>
<svg style="position:absolute;left:893.00px;top:625.00px;" width="8" height="9" viewBox="0 0 8 9"><path d="M2 1.2v6.6l4-3.3z" fill="#222"/></svg>
<div style="position:absolute;left:944.3px;top:488.5px;width:318.6px;height:260px;background:#fff;border-radius:12px;overflow:hidden;box-shadow:0 2px 5px rgba(20,30,60,0.10);"><div style="height:70.2px;background:#eef7fb;"></div></div>
<svg style="position:absolute;left:1236.00px;top:504.00px;" width="6" height="18" viewBox="0 0 6 18"><circle cx="3" cy="3.3" r="1.9" fill="#444"/><circle cx="3" cy="9.1" r="1.9" fill="#444"/><circle cx="3" cy="14.9" r="1.9" fill="#444"/></svg>
<svg style="position:absolute;left:1057.80px;top:509.10px;" width="98.6" height="98.6" viewBox="0 0 98.6 98.6"><use href='#kp' width='98.6' height='98.6'/></svg>
<div class="t" style="left:1070.80px;top:618px;font-size:12.55px;color:#444;transform:scaleX(1.022);-webkit-text-stroke:0.35px #444;">Kelvin Pete</div>
<div class="t" style="left:1063.30px;top:634px;font-size:10.55px;color:#777;transform:scaleX(1.120);">(555) 555-1234</div>
<div class="t" style="left:1040.00px;top:648px;font-size:10.95px;color:#7a7a7a;transform:scaleX(1.107);">kelvinpete@yahoo.com</div>
<div class="t" style="left:964.70px;top:684px;font-size:9.65px;color:#777;transform:scaleX(1.106);">Appointment ID</div>
<div class="t" style="left:963.70px;top:697px;font-size:10.55px;color:#444;transform:scaleX(1.095);">SP0027</div>
<div style="position:absolute;left:1205.20px;top:619.80px;width:58.40px;height:58.40px;background:#14366c;border-radius:50%;box-shadow:0 3px 8px rgba(0,0,0,0.28);"></div>
<svg style="position:absolute;left:1216.40px;top:631.00px;" width="36" height="36" viewBox="0 0 36 36"><path d="M18 3v30M3 18h30" stroke="#fff" stroke-width="3.8" stroke-linecap="round"/></svg>
</div></body></html>
